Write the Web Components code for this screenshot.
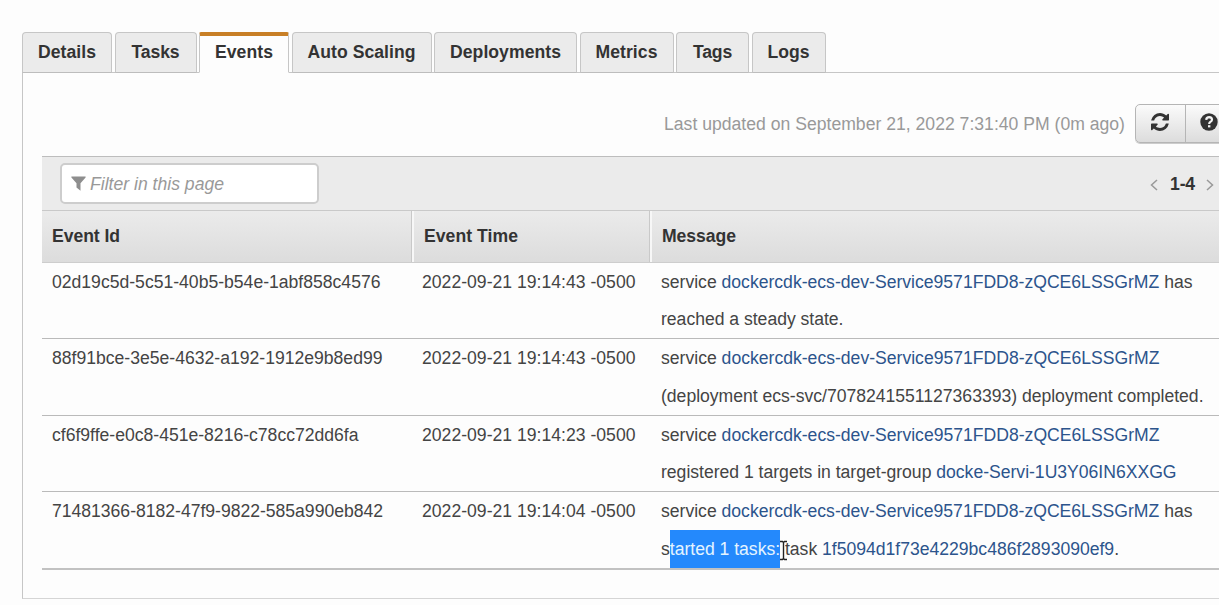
<!DOCTYPE html>
<html lang="en"><head><meta charset="utf-8"><title>Service events</title>
<style>
html,body{margin:0;height:605px;overflow:hidden;background:#fdfdfd}
body{font:17.6px "Liberation Sans",Arial,sans-serif;color:#444}
a{color:#2c548c;text-decoration:none}
mark{display:inline-block;height:37px;background:#2489fc;box-shadow:0 -1px 0 #2489fc;color:#e4f4ff}
</style></head><body>
<service-page>
<tab-item slot="tabs" style="--w:90px" w="58">Details</tab-item><tab-item slot="tabs" style="--w:82px" w="48">Tasks</tab-item><tab-item slot="tabs" active style="--w:90px" w="58">Events</tab-item><tab-item slot="tabs" style="--w:140px" w="108">Auto Scaling</tab-item><tab-item slot="tabs" style="--w:143px" w="111">Deployments</tab-item><tab-item slot="tabs" style="--w:94px" w="62">Metrics</tab-item><tab-item slot="tabs" style="--w:73px" w="39">Tags</tab-item><tab-item slot="tabs" style="--w:74px" w="42">Logs</tab-item>
<update-bar></update-bar>
<filter-bar></filter-bar>
<table-head></table-head>
<event-row><fit-text slot="id" w="328.500">02d19c5d-5c51-40b5-b54e-1abf858c4576</fit-text><fit-text slot="time" w="213.500">2022-09-21 19:14:43 -0500</fit-text><fit-text slot="msg" w="531.500">service <a>dockercdk-ecs-dev-Service9571FDD8-zQCE6LSSGrMZ</a> has</fit-text><fit-text slot="msg" w="182.500">reached a steady state.</fit-text></event-row>
<event-row><fit-text slot="id" w="330.500">88f91bce-3e5e-4632-a192-1912e9b8ed99</fit-text><fit-text slot="time" w="213.500">2022-09-21 19:14:43 -0500</fit-text><fit-text slot="msg" w="498.500">service <a>dockercdk-ecs-dev-Service9571FDD8-zQCE6LSSGrMZ</a></fit-text><fit-text slot="msg" w="542.500">(deployment ecs-svc/7078241551127363393) deployment completed.</fit-text></event-row>
<event-row><fit-text slot="id" w="306.500">cf6f9ffe-e0c8-451e-8216-c78cc72dd6fa</fit-text><fit-text slot="time" w="213.500">2022-09-21 19:14:23 -0500</fit-text><fit-text slot="msg" w="498.500">service <a>dockercdk-ecs-dev-Service9571FDD8-zQCE6LSSGrMZ</a></fit-text><fit-text slot="msg" w="515.500">registered 1 targets in target-group <a>docke-Servi-1U3Y06IN6XXGG</a></fit-text></event-row>
<event-row last><fit-text slot="id" w="331">71481366-8182-47f9-9822-585a990eb842</fit-text><fit-text slot="time" w="213.500">2022-09-21 19:14:04 -0500</fit-text><fit-text slot="msg" w="531.500">service <a>dockercdk-ecs-dev-Service9571FDD8-zQCE6LSSGrMZ</a> has</fit-text><fit-text slot="msg" w="458">s<mark>tarted 1 tasks:</mark><text-cursor></text-cursor> task <a>1f5094d1f73e4229bc486f2893090ef9</a>.</fit-text></event-row>
</service-page>
<script>
const define=(name,html,init)=>customElements.define(name,class extends HTMLElement{
 constructor(){super();this.attachShadow({mode:'open'}).innerHTML=html}
 connectedCallback(){if(init)init(this)}
});
/* Spreads a line of text to the given width with letter spacing. */
define('fit-text',`<style>:host{display:block;flex:none;white-space:nowrap;width:max-content}</style><slot></slot>`,el=>{
 const w=+el.getAttribute('w'),n=el.textContent.length;
 if(w)el.style.letterSpacing=(w-el.getBoundingClientRect().width)/n+'px';
});
define('text-cursor',`<style>:host{display:inline-block;position:relative;width:0;height:1px}svg{position:absolute;left:-1px;top:-14px}</style>
<svg width="9" height="21" viewBox="0 0 9 21" fill="none"><path d="M1 1.5h2.5l1 1 1-1H8M4.5 2v17M1 19.5h2.5l1-1 1 1H8" stroke="#fff" stroke-width="3"/><path d="M1 1.5h2.5l1 1 1-1H8M4.5 2v17M1 19.5h2.5l1-1 1 1H8" stroke="#222" stroke-width="1.4"/></svg>`);
define('tab-item',`<style>
:host{display:flex;box-sizing:border-box;width:var(--w);height:41px;border:1px solid #c6c6c6;border-bottom-color:#bdbdbd;border-radius:4px 4px 0 0;background:#ebebeb;justify-content:center;padding-top:8px;line-height:22px;font-weight:700;color:#333}
:host([active]){background:#fdfdfd;border-top:4px solid #c87f26;border-bottom-color:#fdfdfd;border-radius:2px 2px 0 0;padding-top:5px}
</style><fit-text><slot></slot></fit-text>`,el=>{
 const f=el.shadowRoot.querySelector('fit-text');
 f.style.letterSpacing=(+el.getAttribute('w')-f.getBoundingClientRect().width)/el.textContent.length+'px';
});
define('update-bar',`<style>
:host{display:flex;height:83px;align-items:center;padding:18px 0 0 622px;box-sizing:border-box;color:#999}
.b{display:flex;flex:none;box-sizing:border-box;margin-left:10px;width:120px;height:39px;border:1px solid #b5b5b5;border-radius:5px;background:linear-gradient(#fbfbfb,#dcdcdc);box-shadow:0 1px 0 #ccc}
.b span{box-sizing:border-box;width:49px;height:37px;display:flex;align-items:center;padding-left:15px}
.b span+span{border-left:1px solid #b5b5b5;padding-left:14px}
svg{flex:none;margin-top:-3px}
fit-text{margin-top:1px}
</style><fit-text w="461">Last updated on September 21, 2022 7:31:40 PM (0m ago)</fit-text>
<div class="b"><span><svg width="18" height="18" viewBox="0 0 1536 1536" fill="#333"><path d="M1511 928q0 5-1 7-64 268-268 434.500T764 1536q-146 0-282.500-55T238 1324l-129 129q-19 19-45 19t-45-19-19-45V960q0-26 19-45t45-19h448q26 0 45 19t19 45-19 45l-137 137q71 66 161 102t187 36q134 0 250-65t186-179q11-17 53-117 8-23 30-23h192q13 0 22.500 9.500t9.500 22.500zm25-800v448q0 26-19 45t-45 19h-448q-26 0-45-19t-19-45 19-45l138-138Q969 256 768 256q-134 0-250 65T332 500q-11 17-53 117-8 23-30 23H50q-13 0-22.500-9.500T18 608v-7q65-268 270-434.500T768 0q146 0 284 55.500T1297 212l130-129q19-19 45-19t45 19 19 45z"/></svg></span>
<span><svg width="18" height="18" viewBox="0 0 18 18" fill="none"><circle cx="9" cy="9" r="8.7" fill="#333"/><path d="M6.2 6.900Q6.400 4.200 9.200 4.200Q12 4.400 12 6.800Q12 8.200 10.200 9Q9.200 9.500 9.200 11" stroke="#f3f3f3" stroke-width="2.200"/><path d="M8 12.200h2.400v2.200H8z" fill="#f3f3f3"/></svg></span></div>`);
define('filter-bar',`<style>
:host{display:flex;justify-content:space-between;align-items:center;box-sizing:border-box;height:54px;border-top:1px solid #bdbdbd;background:#ebebeb;padding:0 5px 0 18px}
.f{display:flex;box-sizing:border-box;width:259px;height:41px;border:2px solid #cdcdcd;border-radius:5px;background:#fff;align-items:center;padding-left:9px;gap:4px;font-style:italic;color:#999}
.f fit-text{margin-top:1px}
.p{display:flex;align-items:center;font-weight:700;color:#333}
.p fit-text{margin:1px 11px 0 12px}
</style><div class="f"><svg width="15" height="15" viewBox="0 0 15 15" fill="#8e8e8e" style="margin-top:-1px"><path d="M.4.500h14.200v1L9.500 7.200V14.800L5.500 11.500V7.200L.4 1.500z"/></svg><fit-text w="134">Filter in this page</fit-text></div>
<div class="p"><svg width="8" height="12" viewBox="0 0 8 12" fill="none" stroke="#999" stroke-width="1.500" style="margin-top:3px"><path d="M7 1L1.500 6L7 11"/></svg><fit-text w="25">1-4</fit-text><svg width="8" height="12" viewBox="0 0 8 12" fill="none" stroke="#999" stroke-width="1.500" style="margin-top:3px"><path d="M1 1l5.500 5L1 11"/></svg></div>`);
define('table-head',`<style>
:host{display:grid;grid-template-columns:370px 238px 1fr;box-sizing:border-box;height:52.500px;border-top:1px solid #c9c9c9;border-bottom:1px solid #cdcdcd;background:linear-gradient(#ebebeb,#dcdcdc);font-weight:700;color:#333;line-height:51px}
div{padding-left:10px}
div+div{border-left:2px solid #f7f7f7;box-shadow:-1px 0 0 #c9c9c9}
</style><div><fit-text w="68">Event Id</fit-text></div><div><fit-text w="94">Event Time</fit-text></div><div><fit-text w="74">Message</fit-text></div>`);
define('event-row',`<style>
:host{display:grid;grid-template-columns:370px 239px 1fr;box-sizing:border-box;height:76.500px;border-bottom:1px solid #bababa;line-height:37.600px;padding:1.400px 0 0 10px}
:host([last]){border-bottom:2px solid #c2c2c2;height:77.500px;padding-top:1.200px}
</style><div><slot name="id"></slot></div><div><slot name="time"></slot></div><div><slot name="msg"></slot></div>`);
define('service-page',`<style>
:host{display:block;width:1219px;height:605px;overflow:hidden;padding-top:32px;box-sizing:border-box}
.tabs{display:flex;gap:2.500px;padding-left:22px;height:41px;position:relative;z-index:1}
.panel{box-sizing:border-box;margin:-1px 0 0 22px;width:1260px;height:527px;border:1px solid #c6c6c6;border-bottom-color:#d5d5d5;padding-left:19px}
.view{width:1177px}
</style><div class="tabs"><slot name="tabs"></slot></div><div class="panel"><div class="view"><slot></slot></div></div>`);
</script></body></html>
